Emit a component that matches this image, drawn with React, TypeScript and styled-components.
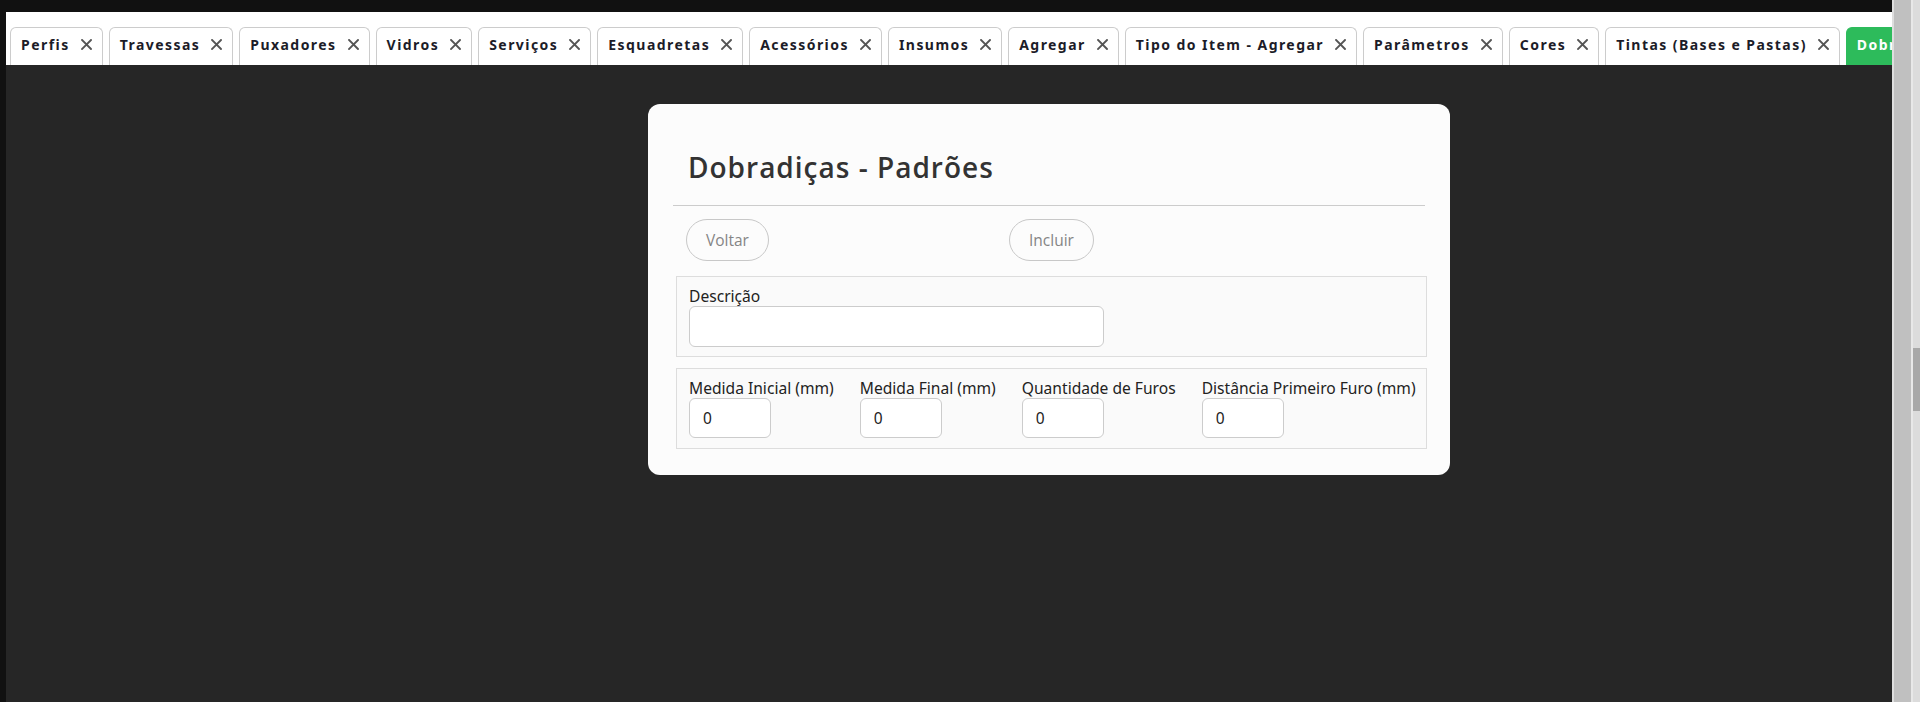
import React from "react";
import styled, { createGlobalStyle } from "styled-components";

const GlobalStyle = createGlobalStyle`
  html, body {
    margin: 0;
    padding: 0;
    background: #111111;
    overflow: hidden;
  }
  * { box-sizing: border-box; }
`;

const Page = styled.div`
  display: flex;
  height: 702px;
  width: 1920px;
`;

const Main = styled.div`
  flex: 1;
  min-width: 0;
  display: flex;
  flex-direction: column;
  background: #111111;
  padding: 12px 0 0 6px;
`;

const TabBar = styled.div`
  height: 53px;
  flex-shrink: 0;
  background: #ffffff;
  display: flex;
  align-items: flex-end;
  gap: 6px;
  padding-left: 4px;
  overflow: hidden;
`;

const Tab = styled.div<{ $active?: boolean }>`
  flex-shrink: 0;
  height: 38px;
  display: flex;
  align-items: flex-start;
  gap: 11px;
  padding: 7px 10px 0 10px;
  border: 1px solid ${(p) => (p.$active ? "#2dbb5b" : "#cccccc")};
  border-bottom: none;
  border-radius: 6px 6px 0 0;
  background: ${(p) => (p.$active ? "#2dbb5b" : "#ffffff")};
  color: ${(p) => (p.$active ? "#ffffff" : "#1c1c28")};
  font-family: "Noto Sans", "DejaVu Sans", sans-serif;
  font-weight: 700;
  font-size: 14px;
  line-height: 20px;
  letter-spacing: 1.45px;
  white-space: nowrap;
`;

const CloseIcon = styled.svg`
  width: 11px;
  height: 11px;
  margin-top: 4px;
  flex-shrink: 0;
`;

const Content = styled.div`
  flex: 1;
  background: #262626;
  padding: 39px 0 0 642px;
`;

const Card = styled.div`
  width: 802px;
  background: #fcfcfc;
  border-radius: 12px;
  padding: 0 25px 26px 25px;
`;

const Title = styled.h1`
  margin: 0;
  padding: 44px 0 19px 15px;
  font-family: "Open Sans", "Noto Sans", sans-serif;
  font-weight: 600;
  font-size: 28px;
  line-height: 38px;
  letter-spacing: 1px;
  color: #333333;
  border-bottom: 1px solid #cccccc;
`;

const ButtonRow = styled.div`
  display: flex;
  padding: 13px 0 0 13px;
  margin-bottom: 15px;
`;

const PillButton = styled.button<{ $offset?: number }>`
  height: 42px;
  padding: 0 19px;
  margin-left: ${(p) => p.$offset ?? 0}px;
  border: 1px solid #c8c8c8;
  border-radius: 21px;
  background: #fcfcfc;
  color: #858585;
  font-family: "Open Sans", "Noto Sans", sans-serif;
  font-size: 15.5px;
  cursor: pointer;
`;

const FieldBox = styled.div<{ $gap?: number }>`
  margin: 0 -2px 0 3px;
  border: 1px solid #dddddd;
  padding: 9px 12px 9px 12px;
  display: flex;
  gap: ${(p) => p.$gap ?? 0}px;
  background: #fafafa;
  & + & {
    margin-top: 11px;
    padding-bottom: 10px;
  }
`;

const Field = styled.div`
  display: flex;
  flex-direction: column;
  align-items: flex-start;
`;

const Label = styled.label`
  font-family: "Noto Sans", sans-serif;
  font-size: 15.6px;
  line-height: 20px;
  color: #222222;
  white-space: nowrap;
`;

const TextInput = styled.input<{ $w: number; $h: number }>`
  width: ${(p) => p.$w}px;
  height: ${(p) => p.$h}px;
  border: 1px solid #cccccc;
  border-radius: 6px;
  background: #ffffff;
  padding: 0 13px;
  font-family: "Noto Sans", sans-serif;
  font-size: 15.5px;
  color: #222222;
  outline: none;
`;

const ScrollGutter = styled.div`
  width: 28px;
  flex-shrink: 0;
  display: flex;
`;

const InnerBar = styled.div`
  width: 19px;
  background: #c0c0c0;
  border-left: 2px solid #dedede;
`;

const PageTrack = styled.div`
  width: 9px;
  background: #dcdcdc;
  border-left: 2px solid #e8e8e8;
  padding-top: 348px;
`;

const Thumb = styled.div`
  height: 63px;
  background: #a8a8a8;
`;

const tabs = [
  "Perfis",
  "Travessas",
  "Puxadores",
  "Vidros",
  "Serviços",
  "Esquadretas",
  "Acessórios",
  "Insumos",
  "Agregar",
  "Tipo do Item - Agregar",
  "Parâmetros",
  "Cores",
  "Tintas (Bases e Pastas)",
];

const X = ({ color }: { color: string }) => (
  <CloseIcon viewBox="0 0 11 11">
    <path d="M1 1 L10 10 M10 1 L1 10" stroke={color} strokeWidth="1.9" strokeLinecap="square" fill="none" />
  </CloseIcon>
);

const numericFields = [
  "Medida Inicial (mm)",
  "Medida Final (mm)",
  "Quantidade de Furos",
  "Distância Primeiro Furo (mm)",
];

export default function App() {
  return (
    <>
      <GlobalStyle />
      <Page>
        <Main>
          <TabBar>
            {tabs.map((t) => (
              <Tab key={t}>
                <span>{t}</span>
                <X color="#555555" />
              </Tab>
            ))}
            <Tab $active>
              <span>Dobradiças - Padrões</span>
              <X color="#ffffff" />
            </Tab>
          </TabBar>
          <Content>
            <Card>
              <Title>Dobradiças - Padrões</Title>
              <ButtonRow>
                <PillButton>Voltar</PillButton>
                <PillButton $offset={240}>Incluir</PillButton>
              </ButtonRow>
              <FieldBox>
                <Field>
                  <Label>Descrição</Label>
                  <TextInput $w={415} $h={41} defaultValue="" />
                </Field>
              </FieldBox>
              <FieldBox $gap={26}>
                {numericFields.map((f) => (
                  <Field key={f}>
                    <Label>{f}</Label>
                    <TextInput $w={82} $h={40} defaultValue="0" />
                  </Field>
                ))}
              </FieldBox>
            </Card>
          </Content>
        </Main>
        <ScrollGutter>
          <InnerBar />
          <PageTrack>
            <Thumb />
          </PageTrack>
        </ScrollGutter>
      </Page>
    </>
  );
}
